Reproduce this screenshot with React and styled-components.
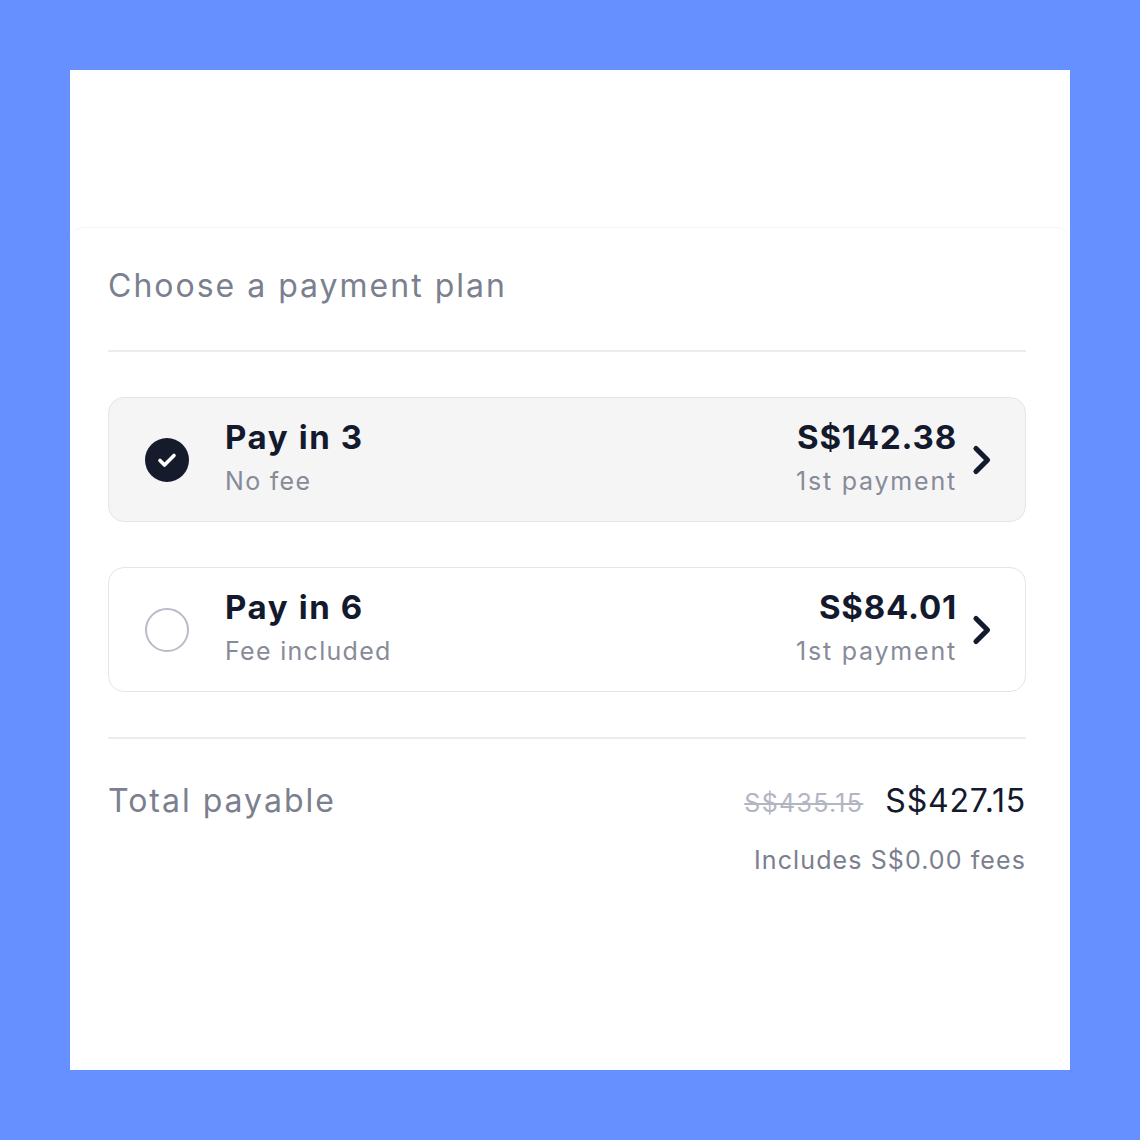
import styled, { createGlobalStyle } from "styled-components"

const Global = createGlobalStyle`
  html, body {
    margin: 0;
    padding: 0;
    background: #6690ff;
  }
  body {
    font-family: Inter, "Noto Sans", sans-serif;
  }
`;

const Frame = styled.div`
  width: 1140px;
  height: 1140px;
  padding: 70px;
  box-sizing: border-box;
  background: #6690ff;
`;

const Panel = styled.div`
  width: 1000px;
  height: 1000px;
  background: #ffffff;
  padding-top: 157px;
  box-sizing: border-box;
`;

const Sheet = styled.div`
  border-top: 1px solid #f3f3f5;
  border-radius: 14px 14px 0 0;
  padding: 38px 44px 0 38px;
`;

const Heading = styled.h2`
  margin: 0;
  font-size: 32px;
  font-weight: 400;
  color: #7b808e;
  letter-spacing: 2px;
  line-height: 40px;
`;

const Divider = styled.div`
  height: 2px;
  background: #ececf0;
  margin: ${props => props.m};
`;

const Card = styled.div`
  display: flex;
  align-items: center;
  height: 125px;
  box-sizing: border-box;
  border: 1.5px solid #e4e5e9;
  border-radius: 16px;
  background: ${props => (props.selected ? "#f5f5f6" : "#ffffff")};
  padding: 0 32px 0 36px;
  margin-bottom: 45px;
`;

const Radio = styled.div`
  width: 44px;
  height: 44px;
  border-radius: 50%;
  box-sizing: border-box;
  display: flex;
  align-items: center;
  justify-content: center;
  background: ${props => (props.checked ? "#161b2c" : "transparent")};
  border: ${props => (props.checked ? "none" : "2px solid #b9bbc6")};
  margin-right: 36px;
`;

const Left = styled.div`
  flex: 1;
  display: flex;
  flex-direction: column;
  gap: 8px;
  padding-bottom: 4px;
`;

const Right = styled(Left)`
  flex: none;
  align-items: flex-end;
`;

const Title = styled.div`
  font-size: 33px;
  font-weight: 700;
  color: #141a2d;
  line-height: 38px;
  letter-spacing: ${props => props.ls || "1.6px"};
`;

const Sub = styled.div`
  font-size: 25px;
  color: #878b98;
  line-height: 34px;
  letter-spacing: ${props => props.ls || "1.3px"};
`;

const Chevron = styled.div`
  margin-left: 14px;
  display: flex;
  align-items: center;
`;

const TotalRow = styled.div`
  display: flex;
  justify-content: space-between;
  align-items: center;
`;

const TotalLabel = styled.div`
  font-size: 32px;
  color: #7b808e;
  letter-spacing: 2px;
`;

const Prices = styled.div`
  display: flex;
  align-items: baseline;
  gap: 22px;
`;

const Old = styled.span`
  font-size: 25px;
  color: #b3b6c2;
  text-decoration: line-through;
  letter-spacing: 1.3px;
`;

const Now = styled.span`
  font-size: 32px;
  color: #141a2d;
  letter-spacing: 0.8px;
`;

const Note = styled.div`
  text-align: right;
  font-size: 25px;
  color: #7b808e;
  margin-top: 25px;
  letter-spacing: 1.1px;
`;

const Check = () => (
  <svg width="22" height="22" viewBox="0 0 22 22">
    <path d="M4 11.5l4.5 4.5 9.5-9.5" fill="none" stroke="#fff" strokeWidth="3.6" strokeLinecap="round" strokeLinejoin="round" />
  </svg>
);

const Arrow = () => (
  <svg width="22" height="32" viewBox="0 0 22 32">
    <path d="M5 4.5l11.5 11.5-11.5 11.5" fill="none" stroke="#141a2d" strokeWidth="5.2" strokeLinecap="round" strokeLinejoin="round" />
  </svg>
);

const plans = [
  { title: "Pay in 3", sub: "No fee", amount: "S$142.38", selected: true },
  { title: "Pay in 6", sub: "Fee included", amount: "S$84.01", selected: false },
];

const App = () => {
  return (
    <Frame>
      <Global />
      <Panel>
        <Sheet>
          <Heading>Choose a payment plan</Heading>
          <Divider m="44px 0 45px" />
          {plans.map(p => (
            <Card key={p.title} selected={p.selected}>
              <Radio checked={p.selected}>{p.selected && <Check />}</Radio>
              <Left>
                <Title>{p.title}</Title>
                <Sub>{p.sub}</Sub>
              </Left>
              <Right>
                <Title ls="0.8px">{p.amount}</Title>
                <Sub ls="1.8px">1st payment</Sub>
              </Right>
              <Chevron>
                <Arrow />
              </Chevron>
            </Card>
          ))}
          <Divider m="0 0 42px" />
          <TotalRow>
            <TotalLabel>Total payable</TotalLabel>
            <Prices>
              <Old>S$435.15</Old>
              <Now>S$427.15</Now>
            </Prices>
          </TotalRow>
          <Note>Includes S$0.00 fees</Note>
        </Sheet>
      </Panel>
    </Frame>
  )
}

export default App
